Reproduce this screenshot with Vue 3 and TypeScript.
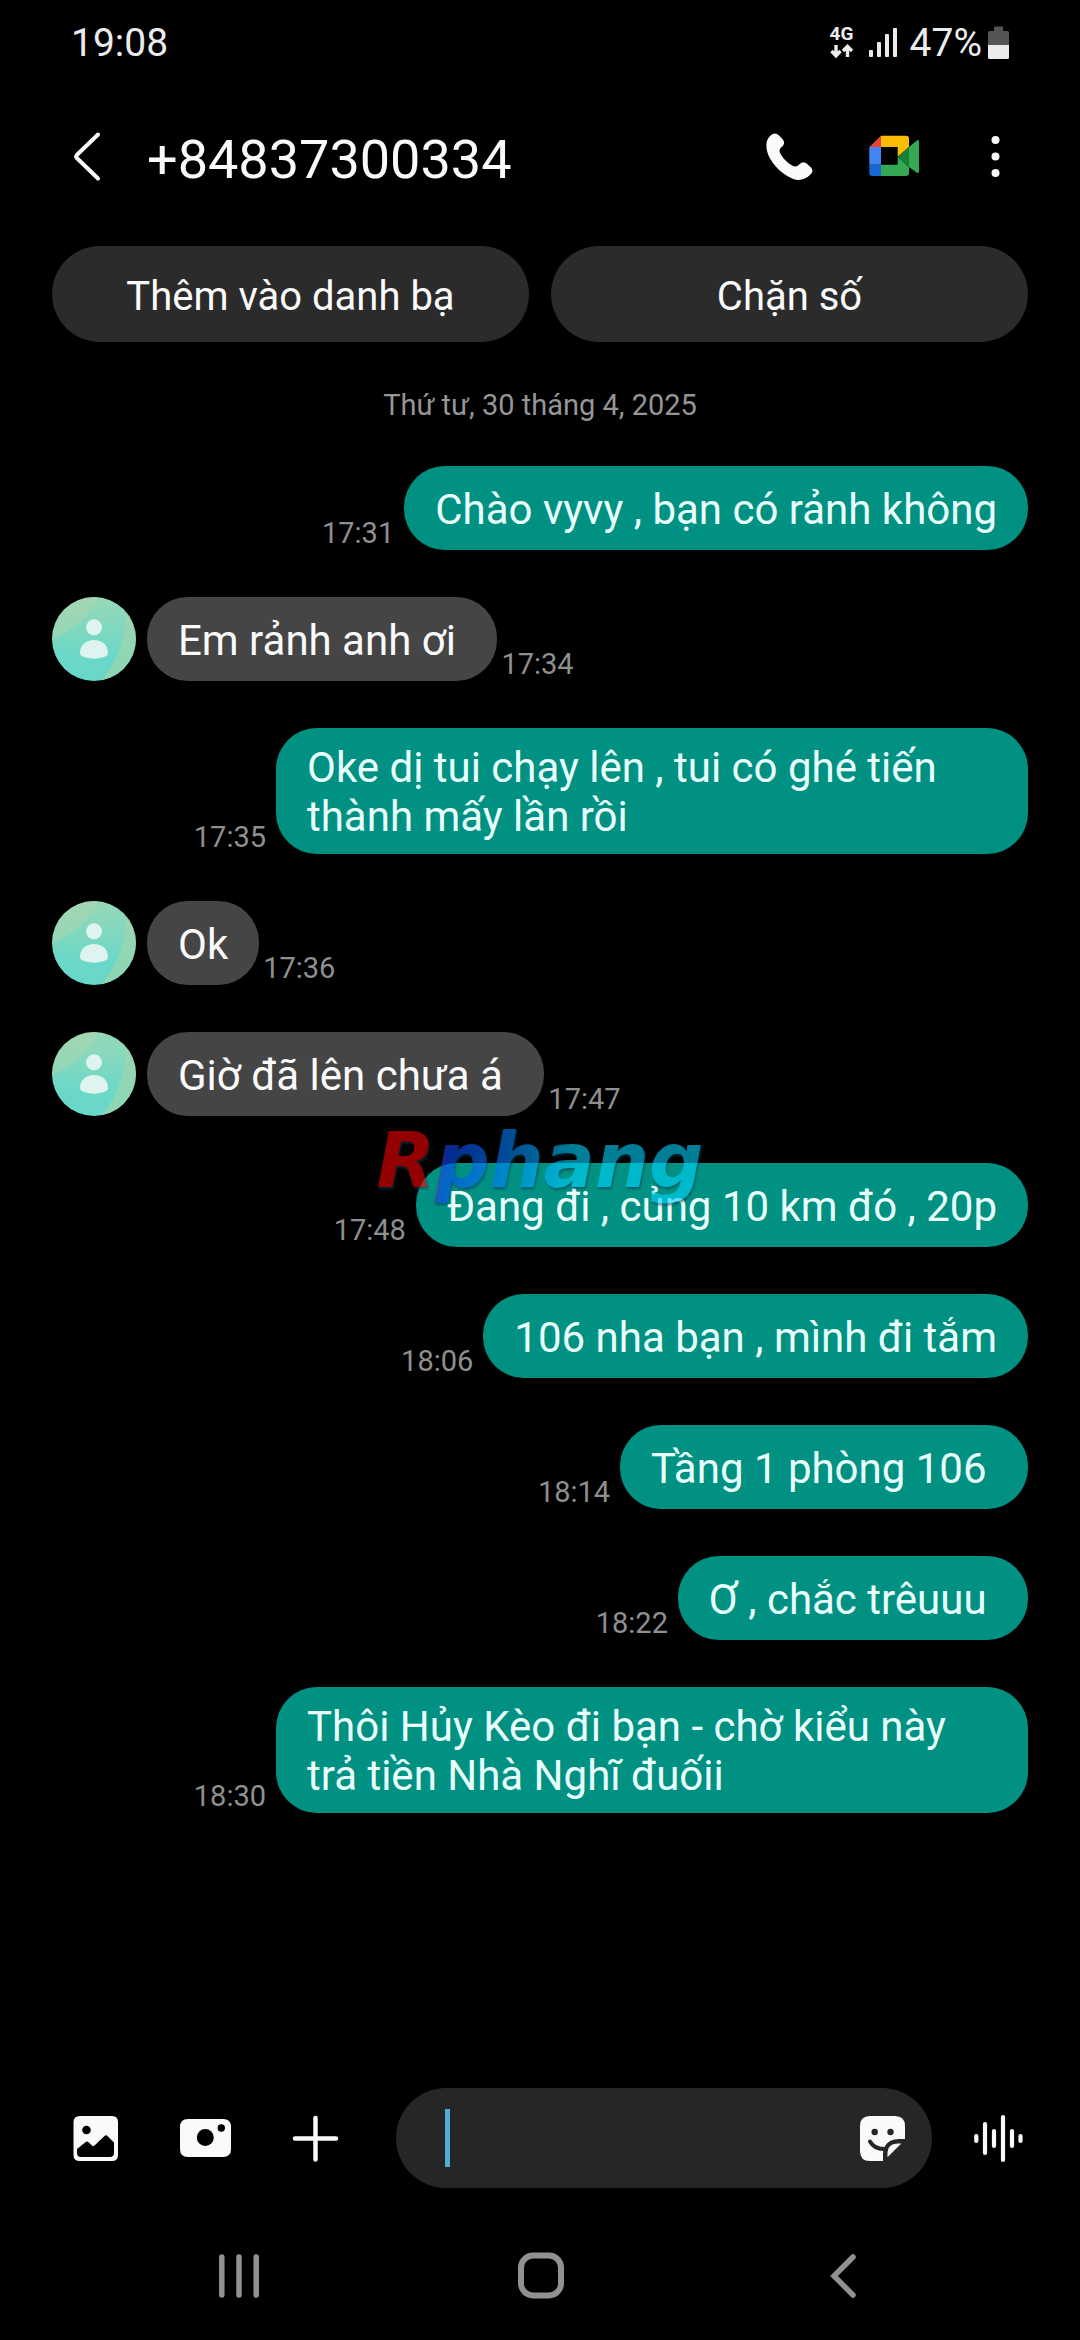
<script setup lang="ts">
import { ref } from 'vue'

interface Message {
  id: number
  text: string
  time: string
  mine: boolean
}

const contact = '+84837300334'
const draft = ref('')

// A trailing \u00a0 keeps the blank that the sender typed after the last word.
const messages: Message[] = [
  { id: 1, text: 'Chào vyvy , bạn có rảnh không', time: '17:31', mine: true },
  { id: 2, text: 'Em rảnh anh ơi\u00a0', time: '17:34', mine: false },
  { id: 3, text: 'Oke dị tui chạy lên , tui có ghé tiến thành mấy lần rồi', time: '17:35', mine: true },
  { id: 4, text: 'Ok', time: '17:36', mine: false },
  { id: 5, text: 'Giờ đã lên chưa á\u00a0', time: '17:47', mine: false },
  { id: 6, text: 'Đang đi , củng 10 km đó , 20p', time: '17:48', mine: true },
  { id: 7, text: '106 nha bạn , mình đi tắm', time: '18:06', mine: true },
  { id: 8, text: 'Tầng 1 phòng 106\u00a0', time: '18:14', mine: true },
  { id: 9, text: 'Ơ , chắc trêuuu\u00a0', time: '18:22', mine: true },
  { id: 10, text: 'Thôi Hủy Kèo đi bạn - chờ kiểu này trả tiền Nhà Nghĩ đuốii', time: '18:30', mine: true },
]
</script>

<template>
  <div class="screen">
    <div class="status">
      <span class="clock">19:08</span>
      <div class="network">
        <span class="network-label">4G</span>
        <svg width="24" height="15" viewBox="0 0 24 15" fill="none" stroke="#ececec" stroke-width="3.4" aria-hidden="true">
          <path d="M6 1V11M1.5 7L6 11.8L10.5 7" />
          <path d="M17.5 13V3M13 7L17.5 2.4L22 7" />
        </svg>
      </div>
      <svg class="signal" width="28" height="32" viewBox="0 0 28 32" fill="#ececec" aria-hidden="true">
        <rect x="0" y="23" width="4" height="7" rx="1" />
        <rect x="8" y="15" width="4" height="15" rx="1" />
        <rect x="16" y="7" width="4" height="23" rx="1" />
        <rect x="24" y="1" width="4" height="29" rx="1" />
      </svg>
      <span class="percent">47%</span>
      <svg class="battery" width="21" height="34" viewBox="0 0 21 34" aria-hidden="true">
        <path d="M6 1.500Q6 .5 7 .5H14Q15 .5 15 1.500V5H19.500Q21 5 21 6.500V19H0V6.500Q0 5 1.500 5H6Z" fill="#555" />
        <path d="M0 19H21V31.500Q21 33 19.500 33H1.500Q0 33 0 31.500Z" fill="#ececec" />
      </svg>
    </div>

    <header class="header">
      <button class="icon-button" type="button" aria-label="Quay lại">
        <svg viewBox="0 0 60 60" fill="none" stroke="#fafafa" stroke-width="4" stroke-linecap="round" stroke-linejoin="round">
          <path d="M41 8.500L19.800 29Q18.500 30.500 19.800 32L41 52.500" />
        </svg>
      </button>
      <h1 class="title">{{ contact }}</h1>
      <div class="actions">
        <button class="icon-button" type="button" aria-label="Gọi">
          <svg viewBox="0 0 60 60" fill="#fafafa">
            <path d="M10.500 9.500Q15 5.500 19 9.500L22.500 13Q25.800 16.800 22.500 20.300Q18.300 23.500 20 27Q24.500 35.500 32.500 39.800Q36.300 42 39.500 38.200Q43.300 34.300 47 37.800L51 41.600Q54.200 45 50.500 48.500Q44 55 36 53.700C22 50 8 35 6.500 22Q5.500 14 10.500 9.500Z" />
          </svg>
        </button>
        <button class="icon-button" type="button" aria-label="Gọi video">
          <svg viewBox="0 0 60 60">
            <path d="M6.300 21L18 9.700V21Z" fill="#ea4335" />
            <path d="M18 9.700H43Q46 9.700 46 12.700V21L34.700 30.700V21H18Z" fill="#fbbc04" />
            <path d="M6.300 21H18V38.700H6.300Z" fill="#4285f4" />
            <path d="M6.300 38.700H18V50H9.300Q6.300 50 6.300 47Z" fill="#1967d2" />
            <path d="M18 38.700H34.700V30.700L46 41V47Q46 50 43 50H18Z" fill="#34a853" />
            <path d="M46 21L53.500 14.700Q56 13 56 16V45Q56 48 53.500 46.500L46 41Z" fill="#34a853" />
            <path d="M34.700 30.700L46 21V41Z" fill="#188038" />
          </svg>
        </button>
        <button class="icon-button" type="button" aria-label="Tùy chọn khác">
          <svg viewBox="0 0 60 60" fill="#fafafa">
            <circle cx="29.500" cy="14" r="4" />
            <circle cx="29.500" cy="30.500" r="4" />
            <circle cx="29.500" cy="47" r="4" />
          </svg>
        </button>
      </div>
    </header>

    <div class="choices">
      <button class="choice" type="button">Thêm vào danh bạ</button>
      <button class="choice" type="button">Chặn số</button>
    </div>

    <main class="thread">
      <p class="date">Thứ tư, 30 tháng 4, 2025</p>
      <div v-for="m in messages" :key="m.id" class="row" :class="{ mine: m.mine }">
        <svg v-if="!m.mine" class="avatar" viewBox="0 0 84 84" aria-hidden="true">
          <defs>
            <linearGradient :id="`shade-${m.id}`" x1="0" y1="0" x2="0" y2="1">
              <stop offset="0" stop-color="#98d8b8" />
              <stop offset="0.75" stop-color="#69d8c9" />
              <stop offset="1" stop-color="#69d8c9" />
            </linearGradient>
          </defs>
          <rect width="84" height="84" :fill="`url(#shade-${m.id})`" />
          <path d="M0 43Q30 30 47 0H0Z" fill="#b4d8a8" opacity="0.4" />
          <path d="M74 14Q74 54 49 84H84V14Z" fill="#a8d6a8" opacity="0.6" />
          <circle cx="42" cy="30.300" r="8" fill="#dff4ee" />
          <path d="M28 56C28 48 34 43 42 43S56 48 56 56Q56 59 51 60.300Q42 63 33 60.300Q28 59 28 56Z" fill="#dff4ee" />
        </svg>
        <p class="bubble">{{ m.text }}</p>
        <time class="time">{{ m.time }}</time>
      </div>
    </main>

    <form class="composer" @submit.prevent>
      <button class="icon-button" type="button" aria-label="Thư viện">
        <svg viewBox="0 0 60 60" fill="#fafafa" fill-rule="evenodd">
          <path d="M14 8H46Q52 8 52 14V47Q52 53 46 53H14Q7.500 53 7.500 47V14Q7.500 8 14 8ZM20.500 17.700A4.300 4.300 0 1 0 20.500 26.300A4.300 4.300 0 1 0 20.500 17.700ZM11 41V45Q11 49 15 49H44Q48 49 48 45V34.500L41.500 28Q40 26.700 38.500 28L28.500 37.500Q27.300 38.500 26 37.500L22.300 34Q21 33 19.700 34Z" />
        </svg>
      </button>
      <button class="icon-button" type="button" aria-label="Máy ảnh">
        <svg viewBox="0 0 60 60" fill="#fafafa" fill-rule="evenodd">
          <path d="M12 11H47Q55 11 55 19V41Q55 49 47 49H12Q4 49 4 41V19Q4 11 12 11ZM29.300 21A8.500 8.500 0 1 0 29.300 38A8.500 8.500 0 1 0 29.300 21ZM45.300 16.300A3.700 3.700 0 1 0 45.300 23.700A3.700 3.700 0 1 0 45.300 16.300Z" />
        </svg>
      </button>
      <button class="icon-button" type="button" aria-label="Thêm">
        <svg viewBox="0 0 60 60" fill="none" stroke="#fafafa" stroke-width="4.500" stroke-linecap="round">
          <path d="M29.500 10V51.500M9 30.500H50" />
        </svg>
      </button>
      <div class="field">
        <span class="caret"></span>
        <input v-model="draft" class="input" type="text" aria-label="Tin nhắn" />
        <button class="icon-button" type="button" aria-label="Nhãn dán">
          <svg viewBox="0 0 60 60">
            <path d="M17 8H42Q52 8 52 18V31H46Q36 31 32 38Q30 41 30 46V53H17Q7 53 7 43V18Q7 8 17 8Z" fill="#fafafa" />
            <path d="M48.300 35.500L34.500 49.300V46Q34.500 35.500 45 35.500Z" fill="#fafafa" />
            <circle cx="21.700" cy="24" r="3.200" fill="#262626" />
            <circle cx="37.500" cy="24" r="3.200" fill="#262626" />
            <path d="M17 33.500Q21.500 41.500 32 41" fill="none" stroke="#262626" stroke-width="4" stroke-linecap="round" />
          </svg>
        </button>
      </div>
      <button class="icon-button voice" type="button" aria-label="Tin nhắn thoại">
        <svg viewBox="0 0 60 60" fill="none" stroke="#fafafa" stroke-width="4.200" stroke-linecap="round">
          <path d="M8.300 28V33M17 16V45M26 23V38M35 9V52M44 23V38M52.500 28V33" />
        </svg>
      </button>
    </form>

    <nav class="system-nav" aria-label="Điều hướng hệ thống">
      <button class="icon-button" type="button" aria-label="Ứng dụng gần đây">
        <svg viewBox="0 0 60 60" fill="none" stroke="#919191" stroke-width="5.500" stroke-linecap="round">
          <path d="M12.800 12V50M30 12V50M47.200 12V50" />
        </svg>
      </button>
      <button class="icon-button" type="button" aria-label="Màn hình chính">
        <svg viewBox="0 0 60 60" fill="none" stroke="#919191" stroke-width="6">
          <rect x="11" y="10.500" width="40" height="40" rx="12" />
        </svg>
      </button>
      <button class="icon-button" type="button" aria-label="Trở về">
        <svg viewBox="0 0 60 60" fill="none" stroke="#919191" stroke-width="5.500" stroke-linecap="round">
          <path d="M42 12L23 31L42 50" />
        </svg>
      </button>
    </nav>

    <div class="watermark">Rphang</div>
  </div>
</template>

<style>
body {
  background: #000;
}
</style>

<style scoped>
.screen {
  position: relative;
  display: flex;
  flex-direction: column;
  min-height: 100vh;
  background: #000;
  color: #fafafa;
  font-family: Roboto, "Noto Sans", sans-serif;
}

button {
  border: 0;
  margin: 0;
  padding: 0;
  background: none;
  color: inherit;
  font-family: inherit;
}

.status {
  display: flex;
  align-items: center;
  box-sizing: border-box;
  height: 84px;
  padding: 1px 71px 0;
  color: #ececec;
  font-size: 39px;
}

.clock {
  flex: 1;
}

.network {
  display: flex;
  flex-direction: column;
  gap: 2px;
  width: 24px;
}

.network-label {
  font-size: 19px;
  font-weight: 700;
  line-height: 16px;
}

.signal {
  margin: 0 13px 0 15px;
}

.battery {
  margin-left: 6px;
}

.header {
  display: flex;
  align-items: center;
  height: 144px;
  padding: 0 54px 0 57px;
}

.icon-button {
  flex: none;
  width: 60px;
  height: 60px;
}

.icon-button svg {
  display: block;
  width: 60px;
  height: 60px;
}

.title {
  flex: 1;
  margin: 0 0 0 30px;
  padding-top: 6px;
  font-size: 54px;
  font-weight: 400;
}

.actions {
  display: flex;
  gap: 43px;
}

.choices {
  display: flex;
  gap: 22px;
  padding: 18px 52px 0;
}

.choice {
  flex: 1;
  height: 96px;
  padding-top: 4px;
  border-radius: 48px;
  background: #2b2b2b;
  font-size: 40px;
}

.thread {
  display: flex;
  flex: 1;
  flex-direction: column;
  gap: 47px;
  padding: 46px 52px;
}

.date {
  margin: 0 0 -3px;
  color: #959595;
  font-size: 29px;
  line-height: 34px;
  text-align: center;
}

.row {
  display: flex;
  align-items: flex-end;
  gap: 4px;
}

.row.mine {
  flex-direction: row-reverse;
  gap: 10px;
}

.avatar {
  flex: none;
  width: 84px;
  height: 84px;
  margin-right: 7px;
  border-radius: 50%;
}

.bubble {
  display: flex;
  align-items: center;
  box-sizing: border-box;
  min-height: 84px;
  max-width: 752px;
  margin: 0;
  padding: 15px 31px 13px;
  border-radius: 41px;
  background: #454545;
  font-size: 42px;
  line-height: 49px;
}

.mine .bubble {
  background: #009183;
  color: #e9fffc;
}

.time {
  color: #8f8f8f;
  font-size: 29px;
  line-height: 34px;
}

.composer {
  display: flex;
  align-items: center;
  gap: 50px;
  padding: 0 52px 22px 66px;
}

.field {
  display: flex;
  flex: 1;
  align-items: center;
  min-width: 0;
  height: 100px;
  padding: 0 19px 0 49px;
  border-radius: 50px;
  box-sizing: border-box;
  background: #262626;
}

.caret {
  flex: none;
  width: 5px;
  height: 58px;
  background: #50aed3;
}

.input {
  flex: 1;
  min-width: 0;
  height: 58px;
  padding: 0;
  border: 0;
  outline: 0;
  background: transparent;
  color: #fafafa;
  font-family: inherit;
  font-size: 42px;
}

.voice {
  margin-left: -14px;
}

.system-nav {
  display: grid;
  grid-template-columns: repeat(3, 1fr);
  place-items: center;
  height: 130px;
  padding: 0 88px;
}

.watermark {
  position: absolute;
  top: 50%;
  left: 50%;
  translate: -50% -50%;
  padding-bottom: 18px;
  background: linear-gradient(98deg, #f50000 17%, #0a46f5 22%, #0082fc 40%, #00d2fc 60%);
  background-clip: text;
  color: transparent;
  filter: drop-shadow(1px 2px 1px #063c4c);
  font-family: "DejaVu Sans", sans-serif;
  font-size: 76px;
  font-style: oblique;
  font-weight: 700;
  line-height: 88px;
  opacity: 0.6;
  pointer-events: none;
}
</style>
